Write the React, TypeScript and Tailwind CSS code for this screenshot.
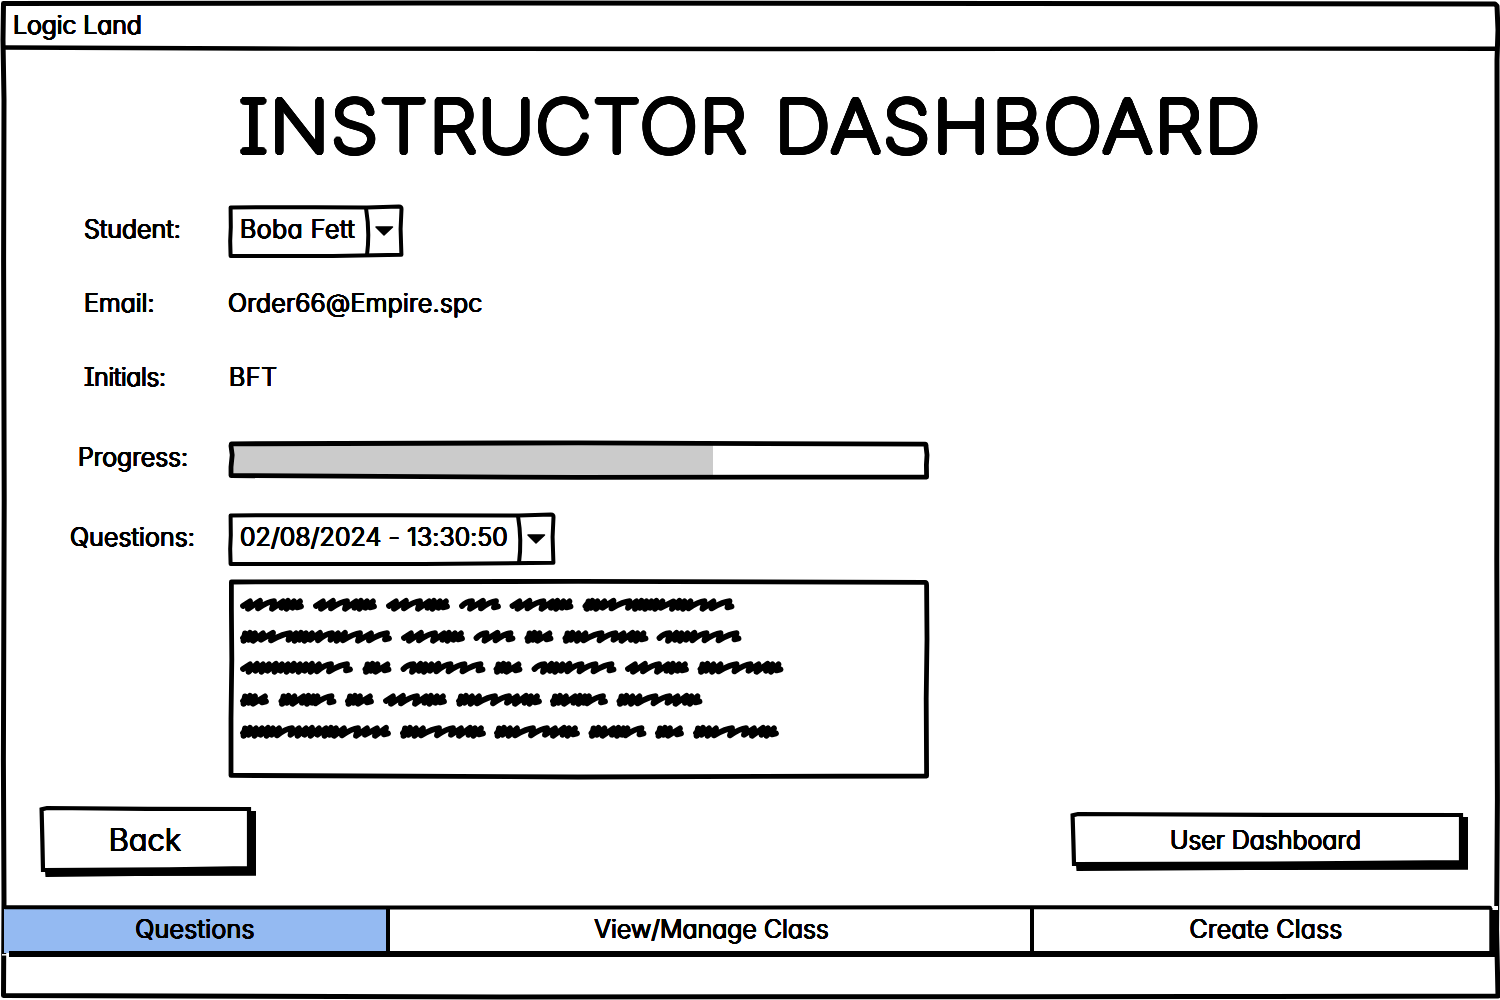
import React from "react";

const ring = (radius: number, steps: number) =>
  Array.from({ length: steps }, (_, i) => {
    const a = (i * 2 * Math.PI) / steps;
    return `${(Math.cos(a) * radius).toFixed(2)}px ${(Math.sin(a) * radius).toFixed(2)}px 0 #000`;
  }).join(", ");

const thinInk = ring(0.48, 12);
const boldInk = ring(3, 24);

/* Rounded, hand-lettered text: a light face thickened by a ring of shadows. */
function Ink({
  children,
  className = "",
  size = "text-[25px]",
}: {
  children: React.ReactNode;
  className?: string;
  size?: string;
}) {
  return (
    <span
      className={`relative block whitespace-nowrap leading-[30px] font-light ${size} ${className}`}
      style={{ textShadow: thinInk }}
    >
      {children}
    </span>
  );
}

function Sketch({
  w,
  h,
  children,
}: {
  w: number;
  h: number;
  children: React.ReactNode;
}) {
  return (
    <svg
      className="pointer-events-none absolute top-0 left-0 overflow-visible"
      width={w}
      height={h}
      viewBox={`0 0 ${w} ${h}`}
      fill="none"
      stroke="#000"
      strokeWidth={4}
      strokeLinejoin="round"
      strokeLinecap="round"
      aria-hidden="true"
    >
      {children}
    </svg>
  );
}

function Dropdown({ w, children }: { w: number; children: React.ReactNode }) {
  return (
    <button className="relative flex h-[52px] items-start pt-[9px] pl-[12px] text-left" style={{ width: w }}>
      <Sketch w={w} h={52}>
        <path
          d={`M2.6 2.4 L${w * 0.5} 2.2 L${w - 36} 2.6 L${w - 4} 1.4 Q${w - 1.5} 1.4 ${w - 1.5} 4 L${w - 2.4} 24 L${w - 1.6} 49.8 L${w * 0.6} 50.9 L2.6 50.9 L2.2 36 L2.8 22 Z`}
        />
        <path d={`M${w - 37} 3 Q${w - 33} 27 ${w - 36} 50`} />
        <path d={`M${w - 27} 22 L${w - 10.5} 22 L${w - 19} 30 Z`} fill="#000" strokeWidth={1.5} />
      </Sketch>
      {children}
    </button>
  );
}

function SketchButton({ w, h, children }: { w: number; h: number; children: React.ReactNode }) {
  return (
    <button className="relative flex justify-center" style={{ width: w, height: h }}>
      <Sketch w={w} h={h}>
        <path
          d={`M6 ${h - 6} L${w - 9} ${h - 8} L${w - 9} 5 L${w} 5 L${w} ${h - 1.2} L${w * 0.45} ${h - 1} L6.5 ${h} Z`}
          fill="#000"
          stroke="none"
        />
        <path
          d={`M2.6 3.4 L8 2 L${w * 0.5} 2.8 L${w - 7} 3 L${w - 7} ${h - 8.8} L${w * 0.6} ${h - 7.6} L4 ${h - 7} L3.4 ${h * 0.5} Z`}
          fill="#fff"
          strokeWidth={4.2}
          strokeLinejoin="miter"
        />
      </Sketch>
      {children}
    </button>
  );
}

/* Horizontal peak positions for each scribbled word, and the word's width. */
const shapes: Record<string, { w: number; peaks: number[] }> = {
  a: { w: 64, peaks: [10, 20, 34, 43, 48, 54, 60] },
  b: { w: 42, peaks: [13, 24, 37] },
  c: { w: 152, peaks: [6, 10, 15, 22, 31, 47, 54, 59, 64, 69, 74, 80, 91, 97, 102, 108, 122, 131, 147] },
  d: { w: 152, peaks: [5, 10, 15, 23, 33, 50, 56, 61, 66, 72, 80, 92, 98, 105, 120, 131, 147] },
  e: { w: 29, peaks: [5, 10, 15, 25] },
  f: { w: 86, peaks: [5, 10, 16, 23, 39, 53, 61, 70, 75, 81] },
  g: { w: 85, peaks: [13, 20, 25, 31, 38, 50, 64, 80] },
  h: { w: 113, peaks: [10, 17, 23, 29, 36, 42, 48, 54, 60, 66, 72, 79, 91, 107] },
  i: { w: 58, peaks: [5, 10, 16, 25, 30, 35, 39, 53] },
  j: { w: 151, peaks: [5, 10, 16, 22, 28, 33, 39, 52, 59, 66, 72, 79, 86, 91, 96, 104, 118, 127, 137, 146] },
};

const scribbleLines: [string, number][][] = [
  [["a", 240], ["a", 313], ["a", 386], ["b", 459], ["a", 509.5], ["c", 582.5]],
  [["d", 240], ["a", 401], ["b", 473.5], ["e", 524.5], ["f", 562.5], ["g", 656.5]],
  [["h", 240], ["e", 362.5], ["g", 400.5], ["e", 493.5], ["g", 531.5], ["a", 625], ["f", 697.5]],
  [["e", 240], ["i", 278.5], ["e", 345], ["a", 383], ["f", 456], ["i", 550], ["f", 616.5]],
  [["j", 240], ["f", 400], ["f", 494], ["i", 588.5], ["e", 655], ["f", 693]],
];

function wordPath(kind: string, x: number) {
  const { w, peaks } = shapes[kind];
  const dense = peaks[0] < 8;
  let d = `M${x + 3} 8`;
  if (dense) d += ` L${x + 6} 4.4 L${x + 4} 10.6`;
  peaks.forEach((p, i) => {
    const before = p - (peaks[i - 1] ?? 0);
    const next = peaks[i + 1];
    if (before > 11) d += ` Q${x + p - 6} 3.6 ${x + p} 3.2`;
    else d += ` L${x + p} ${i % 3 === 1 ? 2.8 : 3.4}`;
    if (next !== undefined) {
      const gap = next - p;
      const vx = gap < 8 ? p - 1.5 : p - 2;
      const vy = gap > 11 ? 10.4 : i % 2 ? 9.8 : 10.8;
      d += ` L${x + vx} ${vy}`;
    }
  });
  d += ` L${x + w - 7} 9.4 L${x + w - 3} 8.4`;
  return d;
}

function Scribbles() {
  return (
    <div className="flex flex-col gap-[17.7px] pt-[19px]">
      {scribbleLines.map((line, i) => (
        <svg
          key={i}
          className="block h-[14px] w-[700px] overflow-visible"
          viewBox="228 0 700 14"
          fill="none"
          stroke="#000"
          strokeWidth={5.8}
          strokeLinecap="round"
          strokeLinejoin="round"
        >
          {line.map(([k, x], j) => (
            <path key={j} d={wordPath(k, x)} />
          ))}
        </svg>
      ))}
    </div>
  );
}

export default function App() {
  return (
    <div className="relative flex h-[1000px] w-[1500px] flex-col overflow-hidden bg-white font-['Inter',sans-serif] text-black [font-feature-settings:'cv11','cv08']">
      <Sketch w={1500} h={1000}>
        <path
          d="M3.5 3.5 L420 3 L1000 3.6 L1495 4 L1497 6 L1498 30 L1497 60 L1497.2 330 L1496.8 560 L1497.4 800 L1496.6 930 L1498 996 L1200 996.5 L500 997 L3.5 995.5 L4 900 L3.4 760 L4.2 500 L3.6 260 L4 100 L3 40 Z"
          strokeWidth={5}
        />
        <path d="M5 47.5 L300 48.6 L800 49 L1300 48.6 L1496 48.8" strokeWidth={4.4} />
      </Sketch>

      <header className="h-[49px] pt-[10px] pl-[13px]">
        <Ink className="tracking-[-0.1px]">Logic Land</Ink>
      </header>

      <main className="flex h-[857px] flex-col">
        <h1
          className="flex h-[156px] pt-[34px] pl-[239px] text-[71px] leading-[87px] font-thin"
          style={{ textShadow: boldInk }}
        >
          <span className="w-[536px] origin-left scale-x-108 tracking-[1.9px]">INSTRUCTOR</span>
          <span className="origin-left scale-x-108 tracking-[2.7px]">DASHBOARD</span>
        </h1>

        <div className="flex h-[83px]">
          <Ink className="w-[228px] pt-[9px] pl-[84px]">Student:</Ink>
          <Dropdown w={175}>
            <Ink className="tracking-[0.5px]">Boba Fett</Ink>
          </Dropdown>
        </div>
        <div className="flex h-[74px]">
          <Ink className="w-[228px] pl-[84px]">Email:</Ink>
          <Ink className="tracking-[0.25px]">Order66@Empire.spc</Ink>
        </div>
        <div className="flex h-[79px]">
          <Ink className="w-[229px] pl-[84px] tracking-[-0.4px]">Initials:</Ink>
          <Ink className="tracking-[0.6px]">BFT</Ink>
        </div>
        <div className="flex h-[72px]">
          <Ink className="w-[228px] pt-px pl-[78px]">Progress:</Ink>
          <div className="relative h-[38px] w-[701px] py-[3px] pl-[4px]">
            <div className="h-[32px] w-[481px] bg-[#cbcbcb]" />
            <Sketch w={701} h={38}>
              <path
                d="M3.4 2.8 L350 1.8 L697 3.2 Q698 3.2 698 5 L699 14 L698.4 24 L698.6 36 L350 36.4 L3 34.6 L3 26 L4.2 14 L3 5 Z"
                strokeWidth={4.8}
              />
            </Sketch>
          </div>
        </div>
        <div className="flex h-[66px]">
          <Ink className="w-[228px] pt-[9px] pl-[70px] tracking-[0.1px]">Questions:</Ink>
          <Dropdown w={327}>
            <Ink className="tracking-[0.1px]">02/08/2024 - 13:30:50</Ink>
          </Dropdown>
        </div>
        <div className="relative ml-[228px] h-[199px] w-[701px]">
          <Sketch w={701} h={199}>
            <path
              d="M3.4 3 L350 2.4 L697 3.4 Q698.6 3.4 698.6 6 L699 60 L698.2 120 L698.6 197 L350 198 L3 196.4 L3 140 L3.8 80 L3.4 30 Z"
              strokeWidth={4.8}
            />
          </Sketch>
          <Scribbles />
        </div>

        <div className="flex items-start justify-between pt-[28px] pr-[32px] pl-[39px]">
          <SketchButton w={217} h={71}>
            <Ink size="text-[31px]" className="pt-[19px] pr-[5px]">Back</Ink>
          </SketchButton>
          <div className="pt-[6px]">
            <SketchButton w={398} h={59}>
              <Ink className="pt-[13px] pr-[7px]">User Dashboard</Ink>
            </SketchButton>
          </div>
        </div>
      </main>

      <nav className="relative flex h-[49px] pl-[4px]">
        <div className="flex h-[47px] w-[383px] justify-center bg-[#94baf2] pt-[8px]">
          <Ink className="pr-[1px] tracking-[0.3px]">Questions</Ink>
        </div>
        <div className="flex h-[47px] w-[646px] justify-center bg-white pt-[8px]">
          <Ink className="pl-[3px]">View/Manage Class</Ink>
        </div>
        <div className="flex h-[47px] w-[458px] justify-center bg-white pt-[8px]">
          <Ink className="pl-[8px] tracking-[0.25px]">Create Class</Ink>
        </div>
        <Sketch w={1500} h={49}>
          <path d="M5 1.2 L500 1.6 L1000 1.2 L1490 1.8" />
          <path d="M9 48 L1498 48" strokeWidth={5.8} strokeLinecap="butt" />
          <path d="M1493.5 2 L1493.5 48" strokeWidth={8.4} strokeLinecap="butt" />
          <path d="M1492.5 2 h5.5" stroke="#fff" strokeWidth={4} strokeLinecap="butt" />
          <path d="M388 2 L388 47 M1032 2 L1032 47" strokeLinecap="butt" />
          <path d="M2 48.8 h6" stroke="#fff" strokeWidth={1.5} strokeLinecap="butt" />
        </Sketch>
      </nav>
      <footer className="flex-1" />
    </div>
  );
}
